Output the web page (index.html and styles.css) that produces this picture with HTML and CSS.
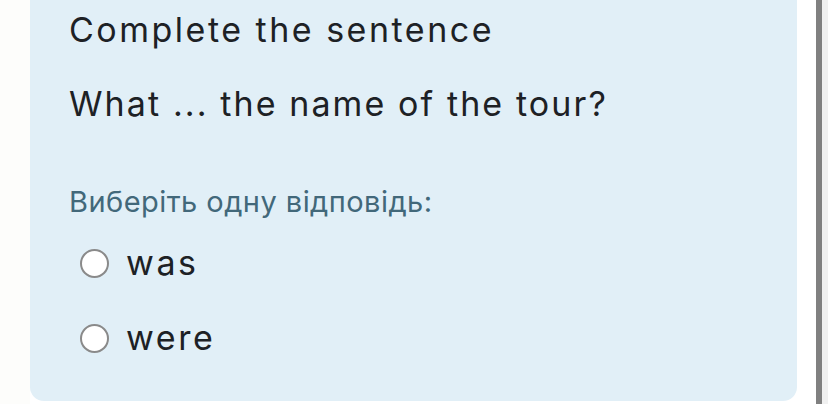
FILE: index.html
```html
<!DOCTYPE html>
<html lang="uk">
<head>
<meta charset="utf-8">
<link rel="stylesheet" href="styles.css">
</head>
<body>
<div class="page">
  <div class="gutter"></div>
  <div class="card">
    <div class="qtext">Complete the sentence</div>
    <div class="qtext second">What ... the name of the tour?</div>
    <div class="prompt">Виберіть одну відповідь:</div>
    <div class="answers">
      <label class="answer"><span class="radio"></span><span class="label">was</span></label>
      <label class="answer"><span class="radio"></span><span class="label">were</span></label>
    </div>
  </div>
  <div class="spacer"></div>
  <div class="scrollbar"></div>
  <div class="track"></div>
</div>
</body>
</html>
```

FILE: styles.css
```css
html, body {
  margin: 0;
  padding: 0;
  background: #ffffff;
}
.page {
  display: flex;
  width: 828px;
  height: 404px;
  overflow: hidden;
  font-family: "Inter", "Open Sans", sans-serif;
  color: #1d2125;
}
.gutter {
  width: 30px;
  flex: none;
  background: #fdfdfb;
}
.card {
  width: 767px;
  flex: none;
  height: 401px;
  box-sizing: border-box;
  background: #e1eff7;
  border-radius: 0 0 14px 14px;
  padding: 8px 0 0 39px;
}
.qtext {
  font-size: 34px;
  line-height: 44px;
  letter-spacing: 2.5px;
}
.qtext.second {
  margin-top: 30px;
  letter-spacing: 2.1px;
}
.prompt {
  margin-top: 58px;
  font-size: 29px;
  line-height: 36px;
  letter-spacing: 0.45px;
  color: #42687a;
}
.answers {
  margin-top: 21px;
  margin-left: 11px;
  display: flex;
  flex-direction: column;
  gap: 31px;
}
.answer {
  display: flex;
  align-items: center;
  height: 44px;
  gap: 17px;
}
.radio {
  width: 29px;
  height: 29px;
  box-sizing: border-box;
  border: 2.5px solid #8a8a8a;
  border-radius: 50%;
  background: #ffffff;
  flex: none;
}
.label {
  font-size: 34px;
  line-height: 44px;
  letter-spacing: 2.6px;
}
.spacer {
  width: 19px;
  flex: none;
}
.scrollbar {
  width: 6px;
  flex: none;
  background: #808080;
}
.track {
  flex: 1;
  background: #f0f0f0;
}
```
